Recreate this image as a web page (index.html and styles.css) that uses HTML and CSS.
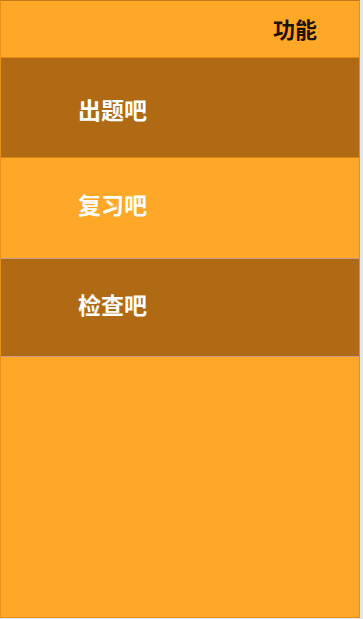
FILE: index.html
```html
<!DOCTYPE html>
<html lang="zh">
<head>
<meta charset="utf-8">
<link rel="stylesheet" href="styles.css">
</head>
<body>
<div class="app">
  <header class="header"><span class="title">功能</span></header>
  <nav class="menu">
    <div class="item dark first">出题吧</div>
    <div class="item light second">复习吧</div>
    <div class="item dark alt">检查吧</div>
  </nav>
</div>
</body>
</html>
```
FILE: styles.css
```css
html, body {
  margin: 0;
  padding: 0;
  background: #e4e6ea;
}
body {
  width: 363px;
  height: 619px;
  font-family: "Noto Sans CJK SC", "Noto Sans", sans-serif;
}
.app {
  box-sizing: border-box;
  width: 360px;
  height: 618px;
  background: #ffa726;
  border-top: 1px solid #c07a1a;
  border-left: 1px solid #e8901a;
  border-right: 1px solid #e8901a;
  border-bottom: 1px solid #e8901a;
  display: flex;
  flex-direction: column;
}
.header {
  box-sizing: border-box;
  height: 57px;
  display: flex;
  align-items: center;
  justify-content: flex-end;
  padding-right: 42px;
  padding-bottom: 2px;
  border-bottom: 1px solid #e58c12;
}
.title {
  font-size: 22px;
  font-weight: 700;
  color: #1e1005;
  line-height: 1;
}
.menu {
  display: flex;
  flex-direction: column;
}
.item {
  box-sizing: border-box;
  height: 100px;
  display: flex;
  align-items: center;
  padding-left: 77px;
  font-size: 23px;
  font-weight: 700;
  color: #ffffff;
  line-height: 1;
}
.dark {
  background: #b06a14;
  border-bottom: 1px solid #d68416;
}
.first {
  padding-top: 3px;
}
.second {
  padding-bottom: 8px;
}
.light {
  background: #ffa726;
}
.alt {
  border-top: 1px solid #c89a8e;
  border-bottom: 1px solid #c89a8e;
  height: 99px;
  padding-bottom: 7px;
}
```
